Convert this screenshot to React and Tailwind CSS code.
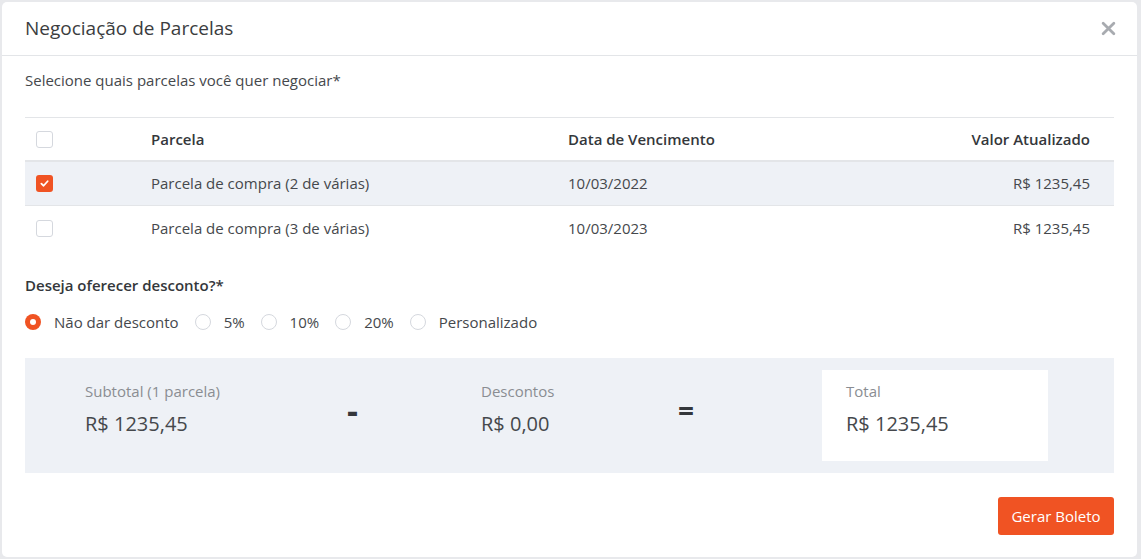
const rows = [
  { label: 'Parcela de compra (2 de várias)', date: '10/03/2022', value: 'R$ 1235,45', checked: true },
  { label: 'Parcela de compra (3 de várias)', date: '10/03/2023', value: 'R$ 1235,45', checked: false },
]

const options = ['Não dar desconto', '5%', '10%', '20%', 'Personalizado']

const Check = ({ checked }) =>
  checked ? (
    <span className="flex h-[17px] w-[17px] items-center justify-center rounded-[3px] bg-[#f05323]">
      <svg width="9" height="9" viewBox="0 0 10 10" fill="none">
        <path d="M1.5 5.2 4 7.5 8.5 2.5" stroke="white" strokeWidth="2" strokeLinecap="round" strokeLinejoin="round" />
      </svg>
    </span>
  ) : (
    <span className="block h-[17px] w-[17px] rounded-[3px] border border-[#d5d8de] bg-white" />
  )

const Radio = ({ on }) =>
  on ? (
    <span className="flex h-4 w-4 items-center justify-center rounded-full bg-[#f05323]">
      <span className="h-[6px] w-[6px] rounded-full bg-white" />
    </span>
  ) : (
    <span className="block h-4 w-4 rounded-full border border-[#d5d8de] bg-white" />
  )

const App = () => {
  return (
    <div className="h-[559px] w-[1141px] bg-[#e8e9ec] pl-[2px] pr-[4px] pt-[2px] pb-[2px]" style={{ fontFamily: '"Open Sans", "Noto Sans", sans-serif' }}>
      <div className="flex h-full flex-col rounded-[5px] bg-white">
        <div className="flex h-[54px] items-center justify-between border-b border-[#e3e5e8] pl-[23px] pr-[21px]">
          <span className="text-[19px] text-[#3b3d40]">Negociação de Parcelas</span>
          <svg width="15" height="15" viewBox="0 0 14 14">
            <path d="M2 2 12 12M12 2 2 12" stroke="#a8abb0" strokeWidth="2.6" strokeLinecap="round" />
          </svg>
        </div>

        <div className="px-[23px]">
          <p className="pt-[14px] text-[15px] leading-[20px] text-[#45484c]">Selecione quais parcelas você quer negociar*</p>

          <div className="mt-[27px] border-t border-[#e3e5e8] text-[15px] text-[#45484c]">
            <div className="grid h-[44px] grid-cols-[126px_417px_1fr_200px] items-center border-b-2 border-[#e3e5e8] font-semibold text-[#34373b]">
              <span className="pl-[11px]"><Check checked={false} /></span>
              <span>Parcela</span>
              <span>Data de Vencimento</span>
              <span className="pr-[24px] text-right">Valor Atualizado</span>
            </div>
            {rows.map((r, i) => (
              <div
                key={r.date}
                className={`grid h-[44px] grid-cols-[126px_417px_1fr_200px] items-center ${i === 0 ? 'border-b border-[#e3e5e8] bg-[#eef1f6]' : ''}`}
              >
                <span className="pl-[11px]"><Check checked={r.checked} /></span>
                <span>{r.label}</span>
                <span>{r.date}</span>
                <span className="pr-[24px] text-right">{r.value}</span>
              </div>
            ))}
          </div>

          <p className="mt-[25px] text-[15px] leading-[20px] font-semibold text-[#34373b]">Deseja oferecer desconto?*</p>
          <div className="mt-[17px] flex items-center gap-[16px] text-[15px] leading-[20px] text-[#45484c]">
            {options.map((o, i) => (
              <label key={o} className="flex items-center gap-[13px]">
                <Radio on={i === 0} />
                <span>{o}</span>
              </label>
            ))}
          </div>

          <div className="mt-[26px] flex h-[115px] items-start bg-[#eef1f6] pl-[60px] pr-[66px]">
            <div className="w-[262px] pt-[23px]">
              <div className="text-[15px] leading-[20px] text-[#8a8d92]">Subtotal (1 parcela)</div>
              <div className="mt-[10px] text-[20px] leading-[26px] text-[#45484c]">R$ 1235,45</div>
            </div>
            <div className="mt-[35px] w-[134px] text-[34px] font-bold leading-[34px] text-[#34373b]">-</div>
            <div className="w-[197px] pt-[23px]">
              <div className="text-[15px] leading-[20px] text-[#8a8d92]">Descontos</div>
              <div className="mt-[10px] text-[20px] leading-[26px] text-[#45484c]">R$ 0,00</div>
            </div>
            <div className="mt-[37px] w-[144px] text-[28px] font-bold leading-[30px] text-[#34373b]">=</div>
            <div className="mt-[12px] h-[91px] flex-1 bg-white pl-[24px] pt-[11px]">
              <div className="text-[15px] leading-[20px] text-[#8a8d92]">Total</div>
              <div className="mt-[10px] text-[20px] leading-[26px] text-[#45484c]">R$ 1235,45</div>
            </div>
          </div>

          <div className="mt-[24px] flex justify-end">
            <button className="h-[38px] w-[116px] rounded-[3px] bg-[#f05323] text-[15px] text-white">Gerar Boleto</button>
          </div>
        </div>
      </div>
    </div>
  )
}

export default App
